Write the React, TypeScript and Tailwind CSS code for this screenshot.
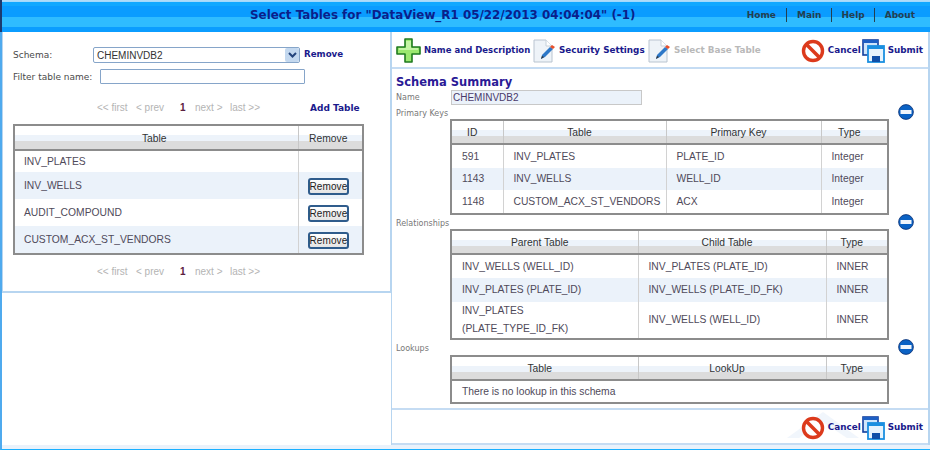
import React from "react";

const verdana = "font-['DejaVu_Sans',Verdana,sans-serif]";

function PlusIcon() {
  return (
    <svg width="25" height="25" viewBox="0 0 25 25" className="shrink-0">
      <path d="M9 1h7v8h8v7h-8v8H9v-8H1V9h8z" fill="#9be86f" stroke="#1f7a1f" strokeWidth="1.6" strokeLinejoin="round" />
      <path d="M10 3h5v7h-5zM3 10h19v2H3z" fill="#c4f5a4" />
    </svg>
  );
}

function DocIcon() {
  return (
    <svg width="24" height="26" viewBox="0 0 24 26" className="shrink-0">
      <path d="M2 2h12l6 6v16H2z" fill="#eef3f8" stroke="#b9c4d0" />
      <path d="M14 2v6h6" fill="#fff" stroke="#c6d0da" />
      <path d="M9 21l1-4 8-8 3 2-8 8z" fill="#2d78c8" />
      <path d="M9 21l1-3 2 1z" fill="#333" />
      <path d="M18 9l2-2 3 2-2 2z" fill="#e8502a" />
    </svg>
  );
}

function CancelIcon() {
  return (
    <svg width="24" height="24" viewBox="0 0 24 24" className="shrink-0">
      <circle cx="12" cy="12" r="9.5" fill="#fff" stroke="#dc3a1c" strokeWidth="3.4" />
      <path d="M5.5 5.5l13 13" stroke="#dc3a1c" strokeWidth="3.6" />
    </svg>
  );
}

function SaveIcon() {
  return (
    <svg width="23" height="24" viewBox="0 0 23 24" className="shrink-0">
      <rect x="1" y="1" width="15" height="15" fill="#cfe6fb" stroke="#123f9e" strokeWidth="1.6" />
      <rect x="1" y="1" width="15" height="3" fill="#1d5fc4" />
      <rect x="6" y="7" width="16" height="16" fill="#e6f3fd" stroke="#1a8fe0" strokeWidth="1.8" />
      <rect x="6" y="7" width="16" height="3" fill="#1a8fe0" />
      <rect x="10" y="17" width="8" height="6" fill="#0f4fa8" />
    </svg>
  );
}

function MinusIcon() {
  return (
    <svg width="16" height="16" viewBox="0 0 16 16" className="shrink-0 -translate-y-[1px]">
      <circle cx="8" cy="8" r="7.4" fill="#0b62c4" stroke="#0a2f72" strokeWidth="0.8" />
      <rect x="2.5" y="6" width="11" height="4" fill="#f2f6fb" />
    </svg>
  );
}

function Action({
  icon,
  label,
  dim,
  className = "",
  textSize = "text-[8.8px]",
}: {
  icon: React.ReactNode;
  label: string;
  dim?: boolean;
  className?: string;
  textSize?: string;
}) {
  return (
    <div className={`flex items-center gap-[3px] whitespace-nowrap shrink-0 ${className}`}>
      {icon}
      <span className={`${textSize} font-bold ${dim ? "text-[#b9b9b9]" : "text-[#1a1a8c]"}`}>{label}</span>
    </div>
  );
}

function Pager() {
  return (
    <div className="flex text-[10px] text-[#b4b4b4] font-['Liberation_Sans',Arial,sans-serif]">
      <span className="w-[39px]">&lt;&lt; first</span>
      <span className="w-[44px]">&lt; prev</span>
      <span className="w-[15px] font-bold text-[#5a2040]">1</span>
      <span className="w-[35px]">next &gt;</span>
      <span>last &gt;&gt;</span>
    </div>
  );
}

type Cell = React.ReactNode;

function DataTable({
  widths,
  heads,
  rows,
  heights,
  headPad = "pr-[10px] pt-[2px]",
  headHeight = "h-[24px]",
  cellPad = "pl-[10px]",
}: {
  widths: number[];
  heads: string[];
  rows: Cell[][];
  heights: number[];
  headPad?: string;
  headHeight?: string;
  cellPad?: string;
}) {
  return (
    <table className="table-fixed border-collapse border-2 border-[#8c8c8c] w-full font-['Liberation_Sans',Arial,sans-serif] text-[10.3px] text-[#4f4a5a]">
      <colgroup>
        {widths.map((w, i) => (
          <col key={i} style={{ width: w }} />
        ))}
      </colgroup>
      <thead>
        <tr className={headHeight}>
          {heads.map((h, i) => (
            <th
              key={i}
              className={`p-0 ${headPad} font-normal text-[#333] border-b-2 border-b-[#8c8c8c] ${i > 0 ? "border-l border-l-[#c8c8c8]" : ""} bg-[linear-gradient(#fff_0,#fff_9px,#edf3fa_9px,#edf3fa_15px,#dcdcdc_15px,#dcdcdc_100%)]`}
            >
              {h}
            </th>
          ))}
        </tr>
      </thead>
      <tbody>
        {rows.map((r, ri) => (
          <tr key={ri} className={ri % 2 ? "bg-[#ebf2fa]" : "bg-white"} style={{ height: heights[ri] }}>
            {r.map((c, ci) => (
              <td
                key={ci}
                colSpan={r.length === 1 ? widths.length : undefined}
                className={`p-0 ${cellPad} leading-[18px] ${ci > 0 ? "border-l border-l-[#d2d2d2]" : ""}`}
              >
                {c}
              </td>
            ))}
          </tr>
        ))}
      </tbody>
    </table>
  );
}

function RemoveBtn() {
  return (
    <button className="block translate-y-[1px] w-[41px] h-[17px] whitespace-nowrap rounded-[3px] border-2 border-[#2f5c8c] bg-[linear-gradient(#fff,#e4e4e4)] font-['Liberation_Sans',Arial,sans-serif] text-[10px] tracking-[0.1px] text-[#222] leading-[13px] text-center">
      Remove
    </button>
  );
}

function Section({ label, children }: { label: string; children?: React.ReactNode }) {
  return (
    <div className="mt-[2px]">
      <div className="flex items-center justify-between h-[12px] pl-[4px] pr-[14px]">
        <span className="pt-[1px] text-[8px] text-[#777]">{label}</span>
        <MinusIcon />
      </div>
      <div className="ml-[58px] w-[437px]">{children}</div>
    </div>
  );
}

function SubmitBar() {
  return (
    <>
      <Action icon={<CancelIcon />} label="Cancel" />
      <div className="w-[1px]" />
      <Action icon={<SaveIcon />} label="Submit" />
    </>
  );
}

export default function App() {
  return (
    <div className={`w-[930px] h-[450px] bg-white overflow-hidden flex flex-col ${verdana}`}>
      <header className="h-[32px] shrink-0 flex items-center border-l-2 border-l-[#1c3a6e] bg-[linear-gradient(#b5dcf5_0,#9bd8ff_2px,#10a8ff_2px,#10a8ff_6px,#0a9cff_6px,#0a9cff_17px,#2fbcff_17px,#2fbcff_27px,#0b9dff_27px,#0b9dff_32px)]">
        <h1 className="flex-1 min-w-0 whitespace-nowrap pl-[248px] text-[11.9px] font-bold text-[#0b1f8a]">
          Select Tables for "DataView_R1 05/22/2013 04:04:04" (-1)
        </h1>
        <nav className="flex shrink-0 mb-[3px] pr-[15px] text-[9px] font-bold text-[#24404f] leading-[14px]">
          <span className="pr-[10px] border-r border-[#24404f]">Home</span>
          <span className="pl-[10px] pr-[9px] border-r border-[#24404f]">Main</span>
          <span className="pl-[10px] pr-[9px] border-r border-[#24404f]">Help</span>
          <span className="pl-[10px]">About</span>
        </nav>
      </header>
      <div className="flex-1 min-h-0 flex flex-col border-l-2 border-l-[#4faaee] border-b border-b-[#1ab0ff]">
        <div className="h-[413px] shrink-0 flex">
          <aside className="w-[389px] shrink-0 h-[261px] border-l border-b-2 border-r border-[#b7d5f0] text-[9px] text-[#4a4a4a]">
            <div className="pt-[15px] pl-[10px]">
              <div className="flex items-center h-[16px]">
                <span className="w-[80px] pt-[1px] text-[9px]">Schema:</span>
                <div className="flex items-center justify-between w-[207px] h-[16px] border border-[#86a5c9] rounded-[2px] pl-[3px] text-[#333] font-['Liberation_Sans',Arial,sans-serif] text-[10px]">
                  CHEMINVDB2
                  <span className="w-[14px] h-[14px] bg-[#c3d8ef] rounded-[2px] flex items-center justify-center">
                    <svg width="9" height="6" viewBox="0 0 9 6">
                      <path d="M1 1l3.5 3.5L8 1" fill="none" stroke="#24447c" strokeWidth="2" />
                    </svg>
                  </span>
                </div>
                <span className="ml-[4px] text-[8.7px] font-bold text-[#1a1a8c]">Remove</span>
              </div>
              <div className="flex items-center h-[15px] mt-[6px]">
                <span className="w-[87px] pt-[3px] text-[9px] whitespace-nowrap">Filter table name:</span>
                <div className="w-[205px] h-[15px] border border-[#86a5c9] rounded-[1px]" />
              </div>
              <div className="flex items-center h-[14px] mt-[16px] pl-[84px]">
                <Pager />
                <span className="ml-[50px] pt-[4px] text-[9px] font-bold text-[#1a1a8c]">Add Table</span>
              </div>
              <div className="w-[349px] mt-[10px]">
                <DataTable
                  widths={[284, 65]}
                  heads={["Table", "Remove"]}
                  heights={[22, 27, 27, 28]}
                  headPad="pr-[4px] pt-[2px]"
                  headHeight="h-[25px]"
                  cellPad="pl-[9px]"
                  rows={[
                    ["INV_PLATES", ""],
                    ["INV_WELLS", <RemoveBtn />],
                    ["AUDIT_COMPOUND", <RemoveBtn />],
                    ["CUSTOM_ACX_ST_VENDORS", <RemoveBtn />],
                  ]}
                />
              </div>
              <div className="flex mt-[9px] pl-[84px]">
                <Pager />
              </div>
            </div>
          </aside>
          <main className="flex-1 min-w-0 flex flex-col border-l border-r-2 border-[#b7d5f0]">
            <div className="h-[37px] shrink-0 flex items-center pt-[2px] pl-[4px] pr-[5px] border-b-2 border-[#c5dcf3]">
              <Action icon={<PlusIcon />} label="Name and Description" textSize="text-[8.5px]" className="w-[136px]" />
              <Action icon={<DocIcon />} label="Security Settings" className="w-[115px]" />
              <Action icon={<DocIcon />} label="Select Base Table" dim />
              <div className="flex-1" />
              <SubmitBar />
            </div>
            <div className="h-[339px] shrink-0 pt-[6px]">
              <h2 className="pl-[4px] text-[11.5px] leading-[15px] font-bold text-[#2a1a96]">Schema Summary</h2>
              <div className="flex items-center h-[15px] pl-[4px]">
                <span className="w-[55px] text-[8px] text-[#777]">Name</span>
                <div className="w-[191px] h-[15px] pl-[1px] bg-[#ebf2fa] border border-[#c8c8c8] font-['Liberation_Sans',Arial,sans-serif] text-[10px] leading-[13px] text-[#4a3a6a]">
                  CHEMINVDB2
                </div>
              </div>
              <Section label="Primary Keys">
                <DataTable
                  widths={[52, 163, 155, 67]}
                  heads={["ID", "Table", "Primary Key", "Type"]}
                  heights={[24, 22, 24]}
                  rows={[
                    ["591", "INV_PLATES", "PLATE_ID", "Integer"],
                    ["1143", "INV_WELLS", "WELL_ID", "Integer"],
                    ["1148", "CUSTOM_ACX_ST_VENDORS", "ACX", "Integer"],
                  ]}
                />
              </Section>
              <Section label="Relationships">
                <DataTable
                  widths={[187, 188, 62]}
                  heads={["Parent Table", "Child Table", "Type"]}
                  heights={[24, 24, 37]}
                  rows={[
                    ["INV_WELLS (WELL_ID)", "INV_PLATES (PLATE_ID)", "INNER"],
                    ["INV_PLATES (PLATE_ID)", "INV_WELLS (PLATE_ID_FK)", "INNER"],
                    [
                      <>
                        INV_PLATES
                        <br />
                        (PLATE_TYPE_ID_FK)
                      </>,
                      "INV_WELLS (WELL_ID)",
                      "INNER",
                    ],
                  ]}
                />
              </Section>
              <Section label="Lookups">
                <div className="mt-[1px]">
                  <DataTable
                    widths={[187, 188, 62]}
                    heads={["Table", "LookUp", "Type"]}
                    heights={[23]}
                    rows={[["There is no lookup in this schema"]]}
                  />
                </div>
              </Section>
            </div>
            <div className="flex-1 relative flex items-center justify-end pt-[2px] pr-[5px] border-y-2 border-[#c5dcf3]">
              <svg width="90" height="30" viewBox="0 0 90 30" className="absolute right-[55px] top-0">
                <path d="M4 28L40 2l36 26-12 0-24-16-24 16z" fill="#f1f6fc" />
              </svg>
              <div className="relative flex items-center">
                <SubmitBar />
              </div>
            </div>
          </main>
        </div>
        <div className="flex-1 bg-[#eaf2fb]" />
      </div>
    </div>
  );
}
